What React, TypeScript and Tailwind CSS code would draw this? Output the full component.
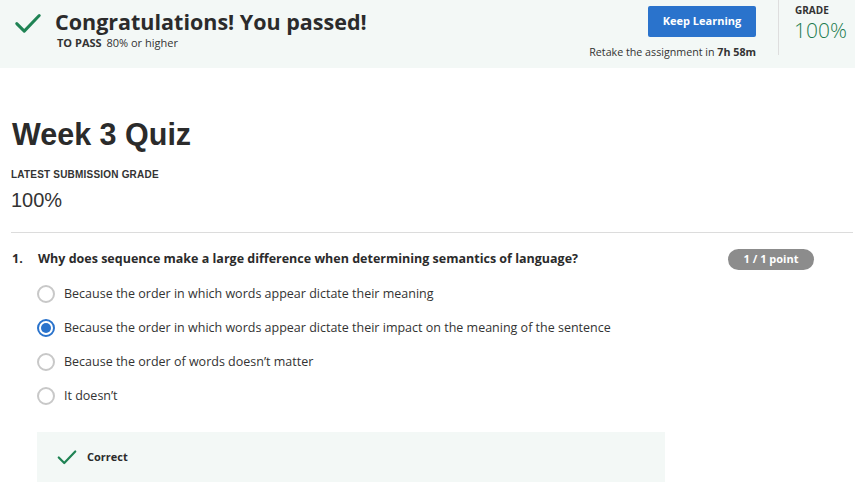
import React from 'react'

const open = { fontFamily: '"Open Sans", sans-serif' }

function Check({ className }: { className?: string }) {
  return (
    <svg viewBox="0 0 24 24" className={className} fill="none" stroke="#1f8354" strokeWidth="2.4" strokeLinecap="round" strokeLinejoin="round">
      <path d="M3 12.5l6 6L21 6" />
    </svg>
  )
}

function Radio({ checked }: { checked?: boolean }) {
  return checked ? (
    <span className="w-[18px] h-[18px] rounded-full border-2 border-[#2a73cc] flex items-center justify-center shrink-0">
      <span className="w-[10px] h-[10px] rounded-full bg-[#2a73cc]" />
    </span>
  ) : (
    <span className="w-[18px] h-[18px] rounded-full border-2 border-[#c8c8c8] shrink-0" />
  )
}

const options = [
  'Because the order in which words appear dictate their meaning',
  'Because the order in which words appear dictate their impact on the meaning of the sentence',
  'Because the order of words doesn’t matter',
  'It doesn’t',
]

export default function App() {
  return (
    <div className="w-[855px] h-[489px] bg-white text-[#1f1f1f] overflow-hidden" style={open}>
      {/* banner */}
      <div className="h-[68px] bg-[#f3f8f6] flex">
        <div className="flex-1 flex pl-[13px] pt-[7px]">
          <Check className="w-[30px] h-[30px] mt-[1px]" />
          <div className="ml-[12px]">
            <div className="text-[21.5px] font-bold leading-[22px] text-[#2b2b2b] pt-[4px]">Congratulations! You passed!</div>
            <div className="text-[11px] mt-[2px] ml-[2px] text-[#333]">
              <span className="font-bold">TO PASS</span> <span className="ml-[2px]">80% or higher</span>
            </div>
          </div>
        </div>
        <div className="flex flex-col items-end pt-[6px] pr-[22px]">
          <button className="w-[108px] h-[31px] bg-[#2a73cc] text-white text-[11px] font-bold rounded-[2px]">Keep Learning</button>
          <div className="text-[10.7px] mt-[7px] text-[#333]">
            Retake the assignment in <span className="font-bold">7h 58m</span>
          </div>
        </div>
        <div className="w-px h-[55px] bg-[#dedede]" />
        <div className="w-[76px] pl-[16px] pt-[3px]">
          <div className="text-[10px] font-bold text-[#333]">GRADE</div>
          <div className="text-[21px] font-light text-[#1d7c50] leading-[24px] -ml-px">100%</div>
        </div>
      </div>

      {/* header */}
      <div className="pl-[11px] pr-[2px]" style={{ fontFamily: '"Liberation Sans", Arial, sans-serif' }}>
        <h1 className="text-[30.5px] font-bold text-[#2b2b2b] mt-[49px] leading-[34px] ml-px">Week 3 Quiz</h1>
        <div className="text-[10px] font-bold text-[#333] mt-[16px] tracking-[0.2px]">LATEST SUBMISSION GRADE</div>
        <div className="text-[20px] text-[#333] mt-[6px] leading-[24px]">100%</div>
        <div className="h-px bg-[#dcdcdc] mt-[20px]" />
      </div>

      {/* question */}
      <div className="pl-[12px] pr-[41px] pt-[16px]">
        <div className="flex items-start">
          <span className="text-[12.5px] font-bold w-[26px] text-[#2b2b2b] pt-[1px]">1.</span>
          <span className="text-[12.5px] font-bold flex-1 text-[#2b2b2b] pt-[1px]">
            Why does sequence make a large difference when determining semantics of language?
          </span>
          <span className="h-[21px] w-[86px] rounded-full bg-[#8c8c8c] text-white text-[11px] font-bold flex items-center justify-center">1 / 1 point</span>
        </div>
        <div className="ml-[25px] mt-[15px] flex flex-col gap-[16px]">
          {options.map((o, i) => (
            <div key={i} className="flex items-center h-[18px]">
              <Radio checked={i === 1} />
              <span className="ml-[9px] text-[12.5px] text-[#333]">{o}</span>
            </div>
          ))}
        </div>
        <div className="ml-[25px] mt-[27px] w-[628px] h-[50px] bg-[#f3f8f6] flex items-center pl-[19px]">
          <Check className="w-[22px] h-[22px]" />
          <span className="ml-[9px] text-[11px] font-bold text-[#2b2b2b]">Correct</span>
        </div>
      </div>
    </div>
  )
}
